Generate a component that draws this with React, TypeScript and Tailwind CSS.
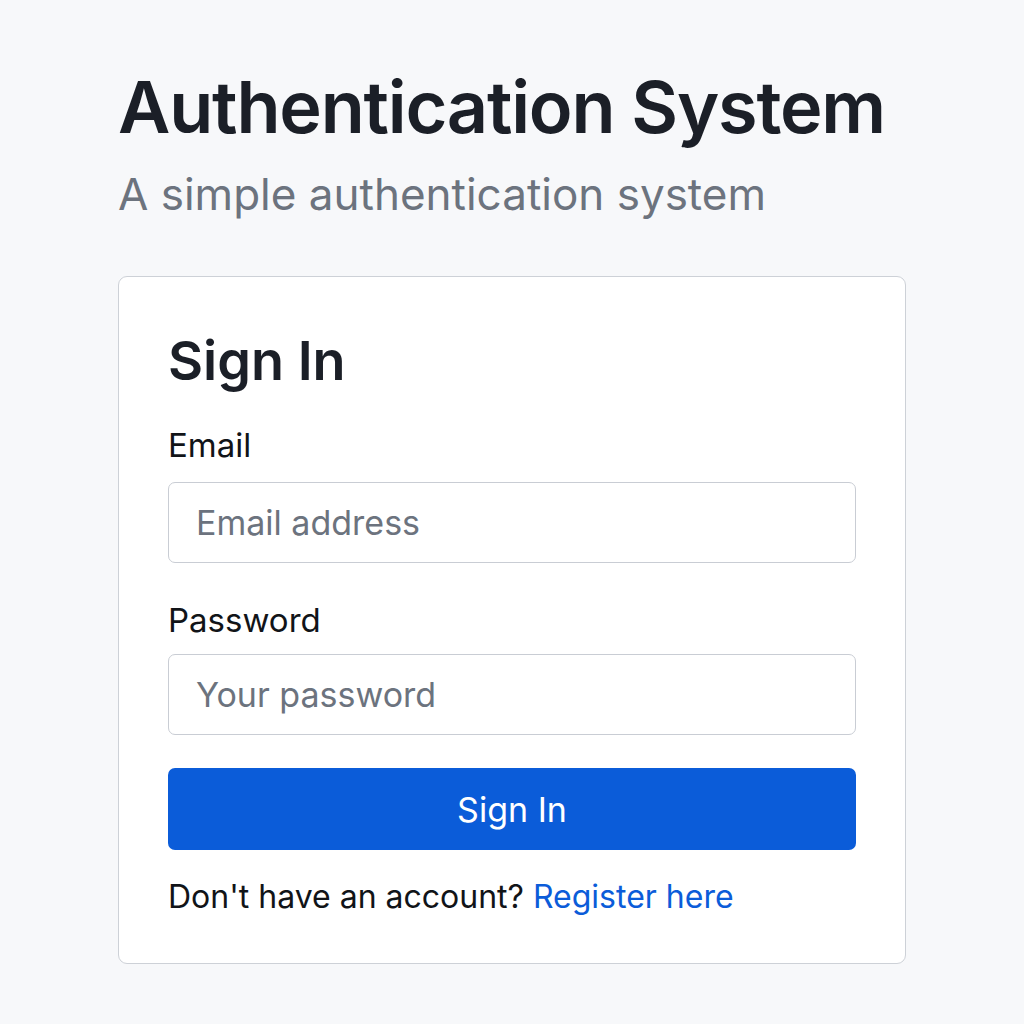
import React, { useState } from 'react';

export default function App() {
    const [email, setEmail] = useState('');
    const [password, setPassword] = useState('');

    return (
        <div className="min-h-screen bg-[#f7f8fa] font-['Inter',sans-serif]">
            <div className="w-[788px] ml-[118px] pt-[64px]">
                <h1 className="text-[72px] leading-[1.2] font-semibold text-[#1b1f27] tracking-[-1.2px]">
                    Authentication System
                </h1>
                <p className="mt-[16px] text-[44px] leading-[1.3] text-[#6c737e]">
                    A simple authentication system
                </p>

                <div className="mt-[52px] bg-white border border-[#cdd1d7] rounded-[9px] px-[49px] pt-[52px] pb-[42px]">
                    <h2 className="text-[54px] leading-[1.2] font-semibold text-[#1b1f27]">Sign In</h2>

                    <form onSubmit={(e) => e.preventDefault()} className="mt-[28px]">
                        <label className="block text-[33px] leading-[1.5] text-[#111418]">Email</label>
                        <input
                            type="email"
                            value={email}
                            onChange={(e) => setEmail(e.target.value)}
                            placeholder="Email address"
                            className="mt-[11px] block w-full h-[81px] px-[27px] text-[34px] border border-[#c9cdd4] rounded-[7px] outline-none placeholder:text-[#6c737e]"
                        />

                        <label className="block mt-[33px] text-[33px] leading-[1.5] text-[#111418]">Password</label>
                        <input
                            type="password"
                            value={password}
                            onChange={(e) => setPassword(e.target.value)}
                            placeholder="Your password"
                            className="mt-[9px] block w-full h-[81px] px-[27px] text-[34px] border border-[#c9cdd4] rounded-[7px] outline-none placeholder:text-[#6c737e]"
                        />

                        <button
                            type="submit"
                            className="mt-[33px] w-full h-[82px] bg-[#0b5cd9] hover:bg-[#0a52c2] text-white text-[34px] rounded-[7px]"
                        >
                            Sign In
                        </button>
                    </form>

                    <p className="mt-[23px] text-[32px] leading-[1.5] text-[#111418]">
                        Don't have an account?{' '}
                        <a href="#" className="text-[#0b5cd9]">Register here</a>
                    </p>
                </div>
            </div>
        </div>
    );
}
